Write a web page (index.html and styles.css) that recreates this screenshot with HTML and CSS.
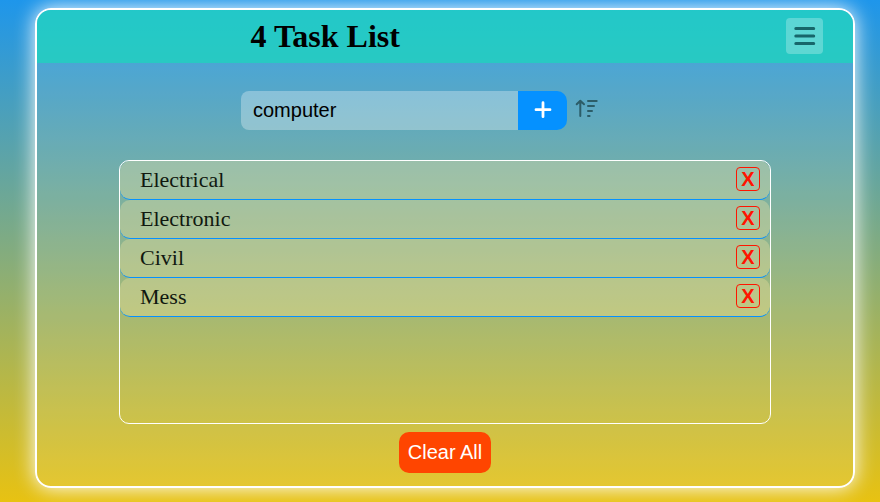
FILE: index.html
```html
<!DOCTYPE html>
<html lang="en">
<head>
<meta charset="utf-8">
<title>Task List</title>
<link rel="stylesheet" href="styles.css">
</head>
<body>
<main class="card">
  <header class="header">
    <h1 class="title">4 Task List</h1>
    <button class="menu" aria-label="Menu">
      <svg width="37" height="36" viewBox="0 0 37 36"><path d="M9.8 10.5H27.7M9.8 18H27.7M9.8 25.5H27.7" stroke="#17666a" stroke-width="3" stroke-linecap="round"/></svg>
    </button>
  </header>
  <form class="entry">
    <input class="field" type="text" value="computer" aria-label="Task">
    <button class="add" type="button" aria-label="Add">
      <svg width="49" height="39" viewBox="0 0 49 39"><path d="M25 11.7V25.7M18 18.7H32" stroke="#fff" stroke-width="2.8" stroke-linecap="round"/></svg>
    </button>
    <svg class="sort" width="24" height="20" viewBox="0 0 24 20" fill="none" stroke="#2c5d68" stroke-width="2" stroke-linecap="round" stroke-linejoin="round"><path d="M5.3 18V3M1.7 6.3L5.3 2.7L9 6.3M13 3H21.7M13 8H19M13 13H17M13 18H14.6"/></svg>
  </form>
  <ul class="list">
    <li class="item"><span>Electrical</span><button class="remove">X</button></li>
    <li class="item"><span>Electronic</span><button class="remove">X</button></li>
    <li class="item"><span>Civil</span><button class="remove">X</button></li>
    <li class="item"><span>Mess</span><button class="remove">X</button></li>
  </ul>
  <button class="clear">Clear All</button>
</main>
</body>
</html>
```
FILE: styles.css
```css
* { box-sizing: border-box; }
html { height: 100%; }
body {
  height: 502px;
  margin: 0;
  padding: 8px 25px 0 35px;
  overflow: hidden;
  background: linear-gradient(#1e96eb, #e8c212);
  font-family: "Liberation Serif", serif;
}
button { border: 0; padding: 0; font-family: "Liberation Sans", sans-serif; }
svg { display: block; }
.card {
  display: flex;
  flex-direction: column;
  width: 820px;
  height: 480px;
  border: 2px solid #fff;
  border-radius: 16px;
  overflow: hidden;
  background: rgba(255, 255, 255, .1);
  box-shadow: 0 0 20px #fff;
}
.header {
  display: flex;
  justify-content: space-between;
  align-items: center;
  height: 53px;
  flex: none;
  padding: 0 30px 1px 213.5px;
  background: rgba(26, 217, 186, .7);
}
.title { margin: 1px 0 0; font-size: 32px; line-height: 37px; }
.menu {
  width: 37px;
  height: 36px;
  border-radius: 4px;
  background: rgba(255, 255, 255, .26);
}
.entry { display: flex; height: 39px; margin: 28px 0 0 204px; }
.field {
  width: 277px;
  height: 39px;
  padding: 0 12px;
  border: 0;
  border-radius: 8px 0 0 8px;
  outline: 0;
  background: rgba(255, 255, 255, .3);
  color: #000;
  font: 20px "Liberation Sans", sans-serif;
}
.add { width: 49px; height: 39px; border-radius: 0 10px 10px 0; background: #0591ff; }
.sort { margin: 7px 0 0 8px; }
.list {
  width: 652px;
  height: 264px;
  flex: none;
  margin: 30px 0 0 82px;
  padding: 0;
  border: 1px solid #fff;
  border-radius: 10px;
  list-style: none;
}
.item {
  display: flex;
  justify-content: space-between;
  align-items: center;
  height: 39px;
  padding: 0 10px 1px 20px;
  border-bottom: 1px solid #0591ff;
  border-radius: 10px;
  background: rgba(255, 235, 165, .3);
  color: #10180f;
  font-size: 22px;
}
.remove {
  width: 24px;
  height: 24px;
  margin-bottom: 2px;
  border: 1px solid #ff1500;
  border-radius: 4px;
  background: none;
  color: #ff1500;
  font-size: 20px;
  font-weight: bold;
  line-height: 22px;
}
.clear {
  width: 92px;
  height: 41px;
  margin: 8px 0 0 362px;
  border-radius: 10px;
  background: #ff4500;
  color: #fff;
  font-size: 20px;
}
```
